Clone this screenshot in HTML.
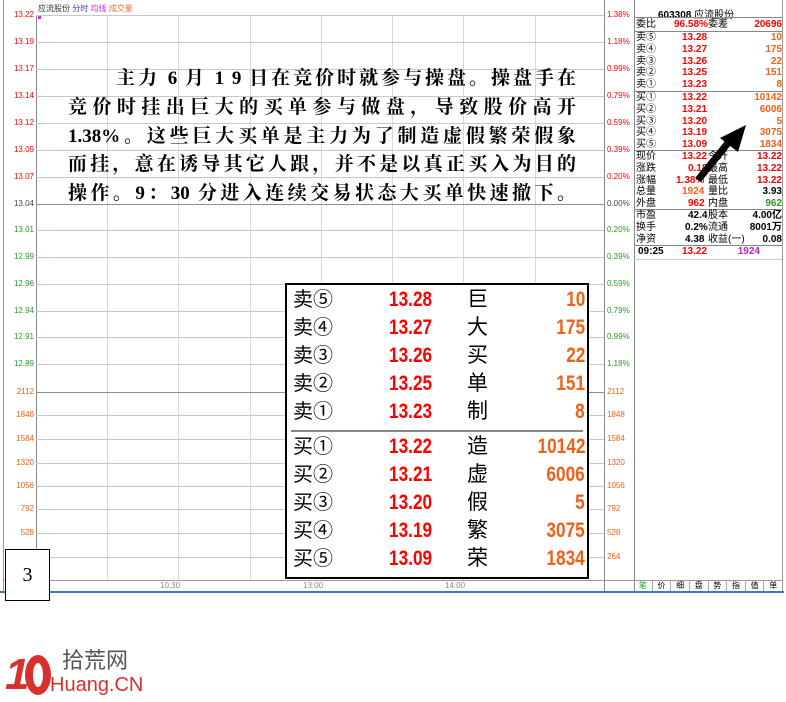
<!DOCTYPE html>
<html><head><meta charset="utf-8">
<style>
*{margin:0;padding:0;box-sizing:border-box}
body{width:786px;height:702px;background:#fff;position:relative;overflow:hidden;font-family:"Liberation Sans","Noto Sans CJK SC",sans-serif}
.a{position:absolute;white-space:nowrap}
.hl{position:absolute;left:36px;width:568px;height:1px;background:#c8c8c8}
.hd{background:#909090}
.vl{position:absolute;top:15px;height:565px;width:1px;background:#d8d8d8}
.ll{position:absolute;left:0;width:34px;text-align:right;font-size:8px;line-height:10px}
.rl{position:absolute;left:607px;font-size:8px;line-height:10px}
.r{color:#f00}.g{color:#2a9a2a}.o{color:#f06018}
.p{position:absolute;left:636px;width:146px;font-size:10px;line-height:11.8px;font-weight:bold}
.p div{position:relative;height:11.8px}
.p span{position:absolute}
.p .c{font-weight:normal}
.txt{position:absolute;left:68px;width:508px;font-family:"Liberation Serif","Noto Serif CJK SC",serif;font-weight:bold;font-size:19px;line-height:29px;text-align:justify;text-align-last:justify;color:#000;white-space:nowrap}
.bx{position:absolute;left:285px;top:283px;width:304px;height:296px;background:#fff;border:2px solid #000}
.bx .row{position:absolute;left:0;width:300px;height:28px;font-size:21px;line-height:28px}
.bx span{position:absolute}
.bx .n{font-weight:bold;transform:scaleX(0.82);transform-origin:left center}
.bx .nr{font-weight:bold;transform:scaleX(0.82);transform-origin:right center}
.bx .l{font-size:20px}
</style></head><body>
<div class="a" style="left:3px;top:0;width:1px;height:591px;background:#999"></div>
<div class="a" style="left:36px;top:15px;width:1px;height:575px;background:#888"></div>
<div class="a" style="left:604px;top:0;width:1px;height:591px;background:#888"></div>
<div class="a" style="left:634px;top:0;width:1px;height:591px;background:#888"></div>
<div class="a" style="left:782px;top:0;width:1px;height:591px;background:#999"></div>
<div class="a" style="left:0;top:591px;width:784px;height:2px;background:#3a78c8"></div>
<div class="a" style="left:3px;top:580px;width:780px;height:1px;background:#999"></div>
<div class="a" style="left:38px;top:3px;font-size:8px;color:#333">应流股份 <span style="color:#3a3ad0">分时</span> <span style="color:#e020e0">均线</span> <span style="color:#f07030">成交量</span></div>
<div class="a" style="left:38px;top:16px;width:3px;height:3px;background:#e020e0"></div>
<div class="vl" style="left:107px"></div><div class="vl" style="left:178px"></div><div class="vl" style="left:250px"></div><div class="vl" style="left:321px"></div><div class="vl" style="left:392px"></div><div class="vl" style="left:463px"></div><div class="vl" style="left:535px"></div>
<div class="hl" style="top:15px"></div><div class="hl" style="top:42px"></div><div class="hl" style="top:69px"></div><div class="hl" style="top:96px"></div><div class="hl" style="top:123px"></div><div class="hl" style="top:150px"></div><div class="hl" style="top:177px"></div><div class="hl hd" style="top:204px"></div><div class="hl" style="top:230px"></div><div class="hl" style="top:257px"></div><div class="hl" style="top:284px"></div><div class="hl" style="top:311px"></div><div class="hl" style="top:337px"></div><div class="hl" style="top:364px"></div><div class="hl hd" style="top:392px"></div><div class="hl" style="top:415px"></div><div class="hl" style="top:439px"></div><div class="hl" style="top:463px"></div><div class="hl" style="top:486px"></div><div class="hl" style="top:509px"></div><div class="hl" style="top:533px"></div><div class="hl" style="top:557px"></div>
<div class="ll r" style="top:10px">13.22</div><div class="ll r" style="top:37px">13.19</div><div class="ll r" style="top:64px">13.17</div><div class="ll r" style="top:91px">13.14</div><div class="ll r" style="top:118px">13.12</div><div class="ll r" style="top:145px">13.09</div><div class="ll r" style="top:172px">13.07</div><div class="ll" style="top:199px;color:#444">13.04</div><div class="ll g" style="top:225px">13.01</div><div class="ll g" style="top:252px">12.99</div><div class="ll g" style="top:279px">12.96</div><div class="ll g" style="top:306px">12.94</div><div class="ll g" style="top:332px">12.91</div><div class="ll g" style="top:359px">12.89</div><div class="ll o" style="top:387px">2112</div><div class="ll o" style="top:410px">1848</div><div class="ll o" style="top:434px">1584</div><div class="ll o" style="top:458px">1320</div><div class="ll o" style="top:481px">1056</div><div class="ll o" style="top:504px">792</div><div class="ll o" style="top:528px">528</div>
<div class="rl r" style="top:10px">1.38%</div><div class="rl r" style="top:37px">1.18%</div><div class="rl r" style="top:64px">0.99%</div><div class="rl r" style="top:91px">0.79%</div><div class="rl r" style="top:118px">0.59%</div><div class="rl r" style="top:145px">0.39%</div><div class="rl r" style="top:172px">0.20%</div><div class="rl" style="top:199px;color:#444">0.00%</div><div class="rl g" style="top:225px">0.20%</div><div class="rl g" style="top:252px">0.39%</div><div class="rl g" style="top:279px">0.59%</div><div class="rl g" style="top:306px">0.79%</div><div class="rl g" style="top:332px">0.99%</div><div class="rl g" style="top:359px">1.18%</div><div class="rl o" style="top:387px">2112</div><div class="rl o" style="top:410px">1848</div><div class="rl o" style="top:434px">1584</div><div class="rl o" style="top:458px">1320</div><div class="rl o" style="top:481px">1056</div><div class="rl o" style="top:504px">792</div><div class="rl o" style="top:528px">528</div><div class="rl o" style="top:552px">264</div>
<div class="a" style="left:160px;top:581px;font-size:8px;color:#888">10:30</div>
<div class="a" style="left:303px;top:581px;font-size:8px;color:#888">13:00</div>
<div class="a" style="left:445px;top:581px;font-size:8px;color:#888">14:00</div>
<div class="txt" style="top:64px;left:116px;width:460px">主力 6 月 1 9 日在竞价时就参与操盘。操盘手在</div>
<div class="txt" style="top:93px">竞价时挂出巨大的买单参与做盘，导致股价高开</div>
<div class="txt" style="top:122px">1.38%。这些巨大买单是主力为了制造虚假繁荣假象</div>
<div class="txt" style="top:150px">而挂，意在诱导其它人跟，并不是以真正买入为目的</div>
<div class="txt" style="top:179px">操作。9：30 分进入连续交易状态大买单快速撤下。</div>
<div class="bx">
<div class="row" style="top:1px"><span class="l" style="left:6px">卖⑤</span><span class="r n" style="left:102px">13.28</span><span style="left:180px">巨</span><span class="o nr" style="right:2px">10</span></div>
<div class="row" style="top:29px"><span class="l" style="left:6px">卖④</span><span class="r n" style="left:102px">13.27</span><span style="left:180px">大</span><span class="o nr" style="right:2px">175</span></div>
<div class="row" style="top:57px"><span class="l" style="left:6px">卖③</span><span class="r n" style="left:102px">13.26</span><span style="left:180px">买</span><span class="o nr" style="right:2px">22</span></div>
<div class="row" style="top:85px"><span class="l" style="left:6px">卖②</span><span class="r n" style="left:102px">13.25</span><span style="left:180px">单</span><span class="o nr" style="right:2px">151</span></div>
<div class="row" style="top:113px"><span class="l" style="left:6px">卖①</span><span class="r n" style="left:102px">13.23</span><span style="left:180px">制</span><span class="o nr" style="right:2px">8</span></div>
<div style="position:absolute;left:4px;top:145px;width:292px;height:2px;background:#888"></div>
<div class="row" style="top:148px"><span class="l" style="left:6px">买①</span><span class="r n" style="left:102px">13.22</span><span style="left:180px">造</span><span class="o nr" style="right:2px">10142</span></div>
<div class="row" style="top:176px"><span class="l" style="left:6px">买②</span><span class="r n" style="left:102px">13.21</span><span style="left:180px">虚</span><span class="o nr" style="right:2px">6006</span></div>
<div class="row" style="top:204px"><span class="l" style="left:6px">买③</span><span class="r n" style="left:102px">13.20</span><span style="left:180px">假</span><span class="o nr" style="right:2px">5</span></div>
<div class="row" style="top:232px"><span class="l" style="left:6px">买④</span><span class="r n" style="left:102px">13.19</span><span style="left:180px">繁</span><span class="o nr" style="right:2px">3075</span></div>
<div class="row" style="top:260px"><span class="l" style="left:6px">买⑤</span><span class="r n" style="left:102px">13.09</span><span style="left:180px">荣</span><span class="o nr" style="right:2px">1834</span></div>
</div>
<div class="a" style="left:5px;top:549px;width:45px;height:52px;border:1px solid #000;background:#fff;font-family:'Liberation Serif',serif;font-size:20px;text-align:center;line-height:50px">3</div>
<div class="a" style="left:658px;top:6px;font-size:10px;font-weight:bold;color:#000">603308 <span style="font-weight:normal">应流股份</span></div>
<div class="a" style="left:634px;top:17px;width:148px;height:1px;background:#888"></div>
<div class="p" style="top:19px"><div><span class="c">委比</span><span class="r" style="left:38px">96.58%</span><span class="c" style="left:72px">委差</span><span class="r" style="right:0">20696</span></div></div>
<div class="a" style="left:634px;top:31px;width:148px;height:1px;background:#888"></div>
<div class="p" style="top:32px">
<div><span class="c">卖⑤</span><span class="r" style="left:46px">13.28</span><span class="o" style="right:0">10</span></div>
<div><span class="c">卖④</span><span class="r" style="left:46px">13.27</span><span class="o" style="right:0">175</span></div>
<div><span class="c">卖③</span><span class="r" style="left:46px">13.26</span><span class="o" style="right:0">22</span></div>
<div><span class="c">卖②</span><span class="r" style="left:46px">13.25</span><span class="o" style="right:0">151</span></div>
<div><span class="c">卖①</span><span class="r" style="left:46px">13.23</span><span class="o" style="right:0">8</span></div>
</div>
<div class="a" style="left:634px;top:91px;width:148px;height:1px;background:#888"></div>
<div class="p" style="top:92px">
<div><span class="c">买①</span><span class="r" style="left:46px">13.22</span><span class="o" style="right:0">10142</span></div>
<div><span class="c">买②</span><span class="r" style="left:46px">13.21</span><span class="o" style="right:0">6006</span></div>
<div><span class="c">买③</span><span class="r" style="left:46px">13.20</span><span class="o" style="right:0">5</span></div>
<div><span class="c">买④</span><span class="r" style="left:46px">13.19</span><span class="o" style="right:0">3075</span></div>
<div><span class="c">买⑤</span><span class="r" style="left:46px">13.09</span><span class="o" style="right:0">1834</span></div>
</div>
<div class="a" style="left:634px;top:150px;width:148px;height:1px;background:#888"></div>
<div class="p" style="top:151px">
<div><span class="c">现价</span><span class="r" style="left:46px">13.22</span><span class="c" style="left:72px">今开</span><span class="r" style="right:0">13.22</span></div>
<div><span class="c">涨跌</span><span class="r" style="left:52px">0.18</span><span class="c" style="left:72px">最高</span><span class="r" style="right:0">13.22</span></div>
<div><span class="c">涨幅</span><span class="r" style="left:40px">1.38%</span><span class="c" style="left:72px">最低</span><span class="r" style="right:0">13.22</span></div>
<div><span class="c">总量</span><span class="o" style="left:46px">1924</span><span class="c" style="left:72px">量比</span><span style="right:0">3.93</span></div>
<div><span class="c">外盘</span><span class="r" style="left:52px">962</span><span class="c" style="left:72px">内盘</span><span class="g" style="right:0">962</span></div>
</div>
<div class="a" style="left:634px;top:209px;width:148px;height:1px;background:#888"></div>
<div class="p" style="top:210px">
<div><span class="c">市盈</span><span style="left:52px">42.4</span><span class="c" style="left:72px">股本</span><span style="right:0">4.00亿</span></div>
<div><span class="c">换手</span><span style="left:49px">0.2%</span><span class="c" style="left:72px">流通</span><span style="right:0">8001万</span></div>
<div><span class="c">净资</span><span style="left:49px">4.38</span><span class="c" style="left:72px">收益(一)</span><span style="right:0">0.08</span></div>
</div>
<div class="a" style="left:634px;top:245px;width:148px;height:1px;background:#888"></div>
<div class="p" style="top:246px"><div><span style="left:2px">09:25</span><span class="r" style="left:46px">13.22</span><span style="right:22px;color:#c020c0">1924</span></div></div>
<div class="a" style="left:634px;top:259px;width:148px;height:1px;background:#ccc"></div>
<svg class="a" style="left:690px;top:120px" width="60" height="65"><line x1="8" y1="60" x2="42" y2="18" stroke="#000" stroke-width="7"/><polygon points="56,5 30,18 48,32" fill="#000"/></svg>
<div class="a" style="left:634px;top:580px;width:148px;height:11px;font-size:8px;display:flex">
<span style="flex:1;text-align:center;color:#2a9a2a;border-right:1px solid #aaa">笔</span><span style="flex:1;text-align:center;border-right:1px solid #aaa">价</span><span style="flex:1;text-align:center;border-right:1px solid #aaa">细</span><span style="flex:1;text-align:center;border-right:1px solid #aaa">盘</span><span style="flex:1;text-align:center;border-right:1px solid #aaa">势</span><span style="flex:1;text-align:center;border-right:1px solid #aaa">指</span><span style="flex:1;text-align:center;border-right:1px solid #aaa">值</span><span style="flex:1;text-align:center">单</span></div>
<div class="a" style="left:5px;top:650px;font-size:44px;font-weight:bold;color:#d83030;font-style:italic;line-height:50px;letter-spacing:-4px">1</div>
<div class="a" style="left:25px;top:655px;width:26px;height:40px;border-radius:50%;border:8px solid #d83030"></div>
<div class="a" style="left:62px;top:648px;font-size:22px;color:#555;line-height:26px">拾荒网</div>
<div class="a" style="left:50px;top:673px;font-size:20px;color:#d83030;line-height:24px">Huang.CN</div>
</body></html>
